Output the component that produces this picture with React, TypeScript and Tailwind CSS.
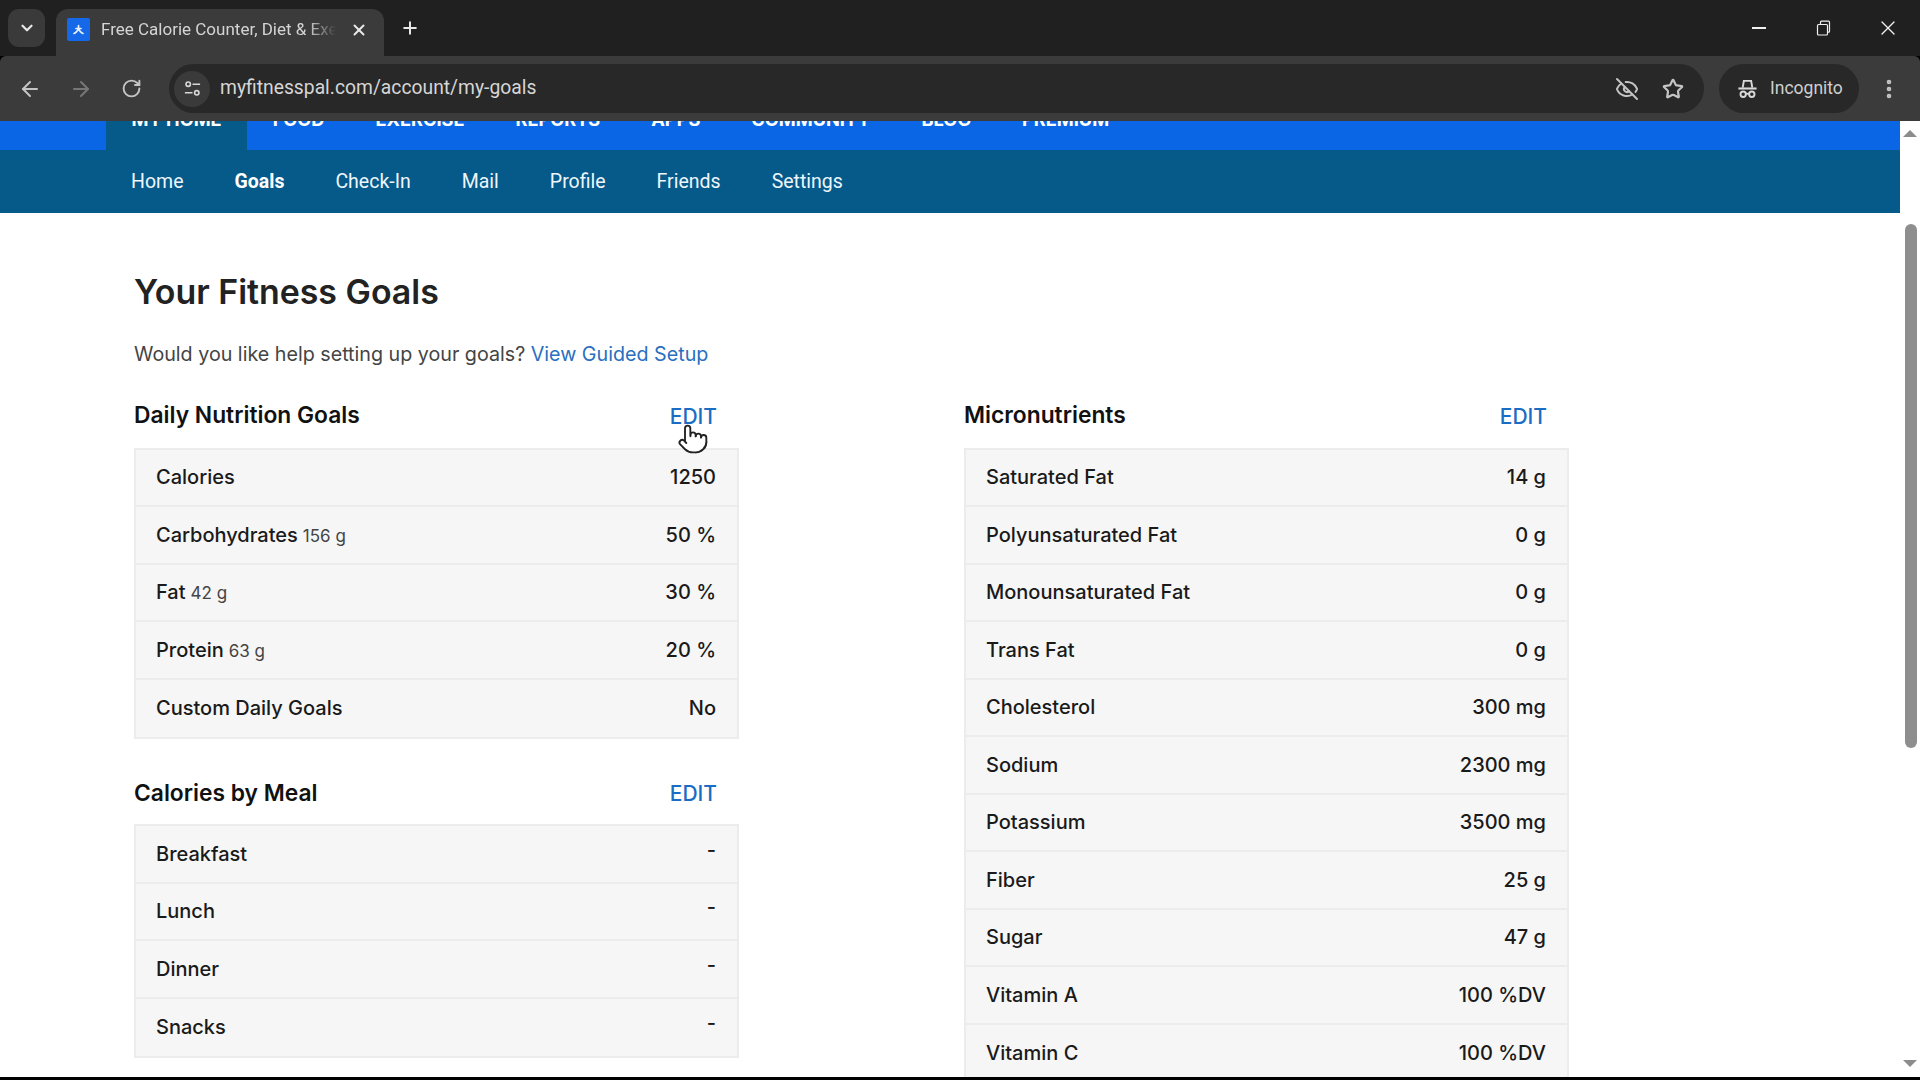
import { ArrowLeft, ArrowRight, ChevronDown, EllipsisVertical, EyeOff, Plus, Pointer, RotateCw, Star, X } from "lucide-react";

const TOP_NAV = [
  { label: "MY HOME", active: true },
  { label: "FOOD" },
  { label: "EXERCISE" },
  { label: "REPORTS" },
  { label: "APPS" },
  { label: "COMMUNITY" },
  { label: "BLOG" },
  { label: "PREMIUM" },
];

const SUB_NAV = ["Home", "Goals", "Check-In", "Mail", "Profile", "Friends", "Settings"];

const NUTRITION = [
  { name: "Calories", value: "1250" },
  { name: "Carbohydrates", sub: "156 g", value: "50 %" },
  { name: "Fat", sub: "42 g", value: "30 %" },
  { name: "Protein", sub: "63 g", value: "20 %" },
  { name: "Custom Daily Goals", value: "No" },
];

const MEALS = ["Breakfast", "Lunch", "Dinner", "Snacks"];

const MICROS = [
  ["Saturated Fat", "14 g"],
  ["Polyunsaturated Fat", "0 g"],
  ["Monounsaturated Fat", "0 g"],
  ["Trans Fat", "0 g"],
  ["Cholesterol", "300 mg"],
  ["Sodium", "2300 mg"],
  ["Potassium", "3500 mg"],
  ["Fiber", "25 g"],
  ["Sugar", "47 g"],
  ["Vitamin A", "100 %DV"],
  ["Vitamin C", "100 %DV"],
];

function Row({ name, sub, value, dash }: { name: string; sub?: string; value: string; dash?: boolean }) {
  return (
    <div className="flex h-[57.5px] shrink-0 items-center justify-between border-b-2 border-[#ececec] pl-[20px] pr-[21px] text-[20px] font-medium text-[#1a1a1a] last:border-b-0">
      <span>
        {name}
        {sub && <span className="ml-[5px] text-[17px] font-normal text-[#444]">{sub}</span>}
      </span>
      <span className={dash ? "-translate-y-[4px]" : ""}>{value}</span>
    </div>
  );
}

function SectionHead({ title, cursor }: { title: string; cursor?: boolean }) {
  return (
    <div className="flex h-[36px] items-center justify-between pr-[22px]">
      <h2 className="text-[22.8px] font-semibold text-[#111]">{title}</h2>
      <a className="relative mt-[2px] text-[21px] font-medium text-[#1a6dc4]">
        EDIT
        {cursor && (
          <Pointer className="absolute left-[7px] top-[22px] h-[32px] w-[32px] fill-white text-[#222]" strokeWidth={1.4} />
        )}
      </a>
    </div>
  );
}

function TuneIcon() {
  return (
    <svg viewBox="0 0 20 20" className="h-[19px] w-[19px]" fill="none" stroke="#d8d8d8" strokeWidth="1.7">
      <circle cx="5.5" cy="5.5" r="2.3" />
      <path d="M10 5.5h8M2 14.5h8" />
      <circle cx="14.5" cy="14.5" r="2.3" />
    </svg>
  );
}

function IncognitoIcon() {
  return (
    <svg viewBox="0 0 24 24" className="h-[23px] w-[23px]" fill="none" stroke="#d8d8d8" strokeWidth="2">
      <path d="M7 11l1.2-7h7.6L17 11" />
      <path d="M2.5 12h19" strokeWidth="2.2" />
      <circle cx="7.5" cy="18" r="2.8" />
      <circle cx="16.5" cy="18" r="2.8" />
      <path d="M10 17.5h4" />
    </svg>
  );
}

function Favicon() {
  return (
    <svg viewBox="0 0 23 23" className="h-[23px] w-[23px] shrink-0 rounded-[2px] bg-[#1568e8]" fill="none" stroke="#e8f0ff" strokeWidth="1.7" strokeLinecap="round">
      <path d="M11.5 7.5v3M7 15.5q3-1 4.5-5q1.5 4 4.5 5M9 10.5h5" />
    </svg>
  );
}

function RestoreIcon() {
  return (
    <svg viewBox="0 0 16 16" className="h-[16px] w-[16px]" fill="none" stroke="#f0f0f0" strokeWidth="1.2">
      <rect x="1.5" y="4.5" width="10" height="10.5" rx="1" />
      <path d="M4.5 4.5V2.2q0-1 1-1h7q1 0 1 1v9q0 1-1 1h-1" />
    </svg>
  );
}

export default function App() {
  return (
    <div className="flex h-screen w-full flex-col overflow-hidden bg-black font-['Inter',sans-serif]">
      {/* browser tab strip */}
      <div className="flex h-[56px] shrink-0 bg-[#202020] pl-[8px] font-['Roboto',sans-serif]">
        <div className="mt-[9px] flex h-[38px] w-[37px] items-center justify-center rounded-[11px] bg-[#3a3a3a]">
          <ChevronDown className="h-[18px] w-[18px] text-[#e6e6e6]" strokeWidth={3} />
        </div>
        <div className="ml-[11px] mt-[9px] flex h-[47px] w-[328px] items-center rounded-t-[12px] bg-[#3b3b3b] pb-[6px] pl-[11px]">
          <Favicon />
          <span className="ml-[11px] w-[235px] overflow-hidden whitespace-nowrap text-[17px] text-[#d4d4d4] [mask-image:linear-gradient(to_right,black_88%,transparent)]">
            Free Calorie Counter, Diet &amp; Exercise
          </span>
          <X className="ml-[14px] h-[18px] w-[18px] text-[#e8e8e8]" strokeWidth={2.6} />
        </div>
        <Plus className="ml-[16px] mt-[18px] h-[20px] w-[20px] text-[#e8e8e8]" strokeWidth={2.4} />
        <div className="ml-auto flex h-[56px] items-center">
          <div className="h-[2px] w-[14px] bg-[#f0f0f0]" />
          <div className="ml-[50px]">
            <RestoreIcon />
          </div>
          <X className="ml-[44px] mr-[20px] h-[24px] w-[24px] text-[#f0f0f0]" strokeWidth={1.4} />
        </div>
      </div>

      {/* browser toolbar */}
      <div className="flex h-[65px] shrink-0 items-center rounded-t-[6px] bg-[#3b3b3b] font-['Roboto',sans-serif]">
        <ArrowLeft className="ml-[18px] h-[24px] w-[24px] text-[#c4c4c4]" strokeWidth={2} />
        <ArrowRight className="ml-[27px] h-[24px] w-[24px] text-[#777]" strokeWidth={2} />
        <RotateCw className="ml-[28px] h-[21px] w-[21px] text-[#c4c4c4]" strokeWidth={2.2} />
        <div className="ml-[27px] flex h-[49px] w-[1535px] items-center rounded-full bg-[#282828] pl-[5px] pr-[20px]">
          <div className="flex h-[36px] w-[36px] items-center justify-center rounded-full bg-[#3a3a3a]">
            <TuneIcon />
          </div>
          <span className="ml-[10px] text-[19.3px] text-[#d6d6d6]">myfitnesspal.com/account/my-goals</span>
          <EyeOff className="ml-auto h-[24px] w-[24px] text-[#c4c4c4]" strokeWidth={2} />
          <Star className="ml-[23px] h-[22px] w-[22px] text-[#c4c4c4]" strokeWidth={2.4} />
        </div>
        <div className="ml-[15px] flex h-[49px] w-[140px] items-center rounded-full bg-[#282828] pl-[17px]">
          <IncognitoIcon />
          <span className="ml-[11px] text-[17.5px] text-[#cfcfcf]">Incognito</span>
        </div>
        <EllipsisVertical className="ml-[18px] h-[24px] w-[24px] text-[#c4c4c4]" strokeWidth={2.6} />
      </div>

      {/* page viewport */}
      <div className="flex h-[956px] shrink-0 bg-white">
        <main className="flex w-[1900px] flex-col overflow-hidden">
          <nav className="flex h-[29px] shrink-0 overflow-hidden bg-[#0b66e6] pl-[106px] text-[18.2px] font-bold text-white">
            {TOP_NAV.map((item) => (
              <span key={item.label} className={`-mt-[2px] h-[31px] px-[25.5px] leading-[0px] ${item.active ? "bg-[#055a8a]" : ""}`}>
                {item.label}
              </span>
            ))}
          </nav>
          <nav className="flex h-[63px] shrink-0 items-center gap-[51px] bg-[#055a8a] pl-[131px] font-['Roboto',sans-serif] text-[19.5px] text-[#eef6fb]">
            {SUB_NAV.map((item) => (
              <a key={item} className={item === "Goals" ? "font-bold text-white" : ""}>
                {item}
              </a>
            ))}
          </nav>

          <div className="flex flex-col pl-[134px] pt-[57px]">
            <h1 className="text-[33.9px] font-semibold leading-[44px] text-[#222]">Your Fitness Goals</h1>
            <p className="mt-[25.5px] text-[19.7px] leading-[28px] text-[#444]">
              Would you like help setting up your goals? <a className="text-[#2a6fc0]">View Guided Setup</a>
            </p>

            <div className="mt-[30px] flex items-start gap-[225px]">
              <div className="flex w-[605px] shrink-0 flex-col">
                <SectionHead title="Daily Nutrition Goals" cursor />
                <div className="mt-[14px] border-2 border-[#ececec] bg-[#f6f6f6]">
                  {NUTRITION.map((row) => (
                    <Row key={row.name} {...row} />
                  ))}
                </div>
                <div className="mt-[36px]">
                  <SectionHead title="Calories by Meal" />
                </div>
                <div className="mt-[13px] border-2 border-[#ececec] bg-[#f6f6f6]">
                  {MEALS.map((meal) => (
                    <Row key={meal} name={meal} value="-" dash />
                  ))}
                </div>
              </div>

              <div className="flex w-[605px] shrink-0 flex-col">
                <SectionHead title="Micronutrients" />
                <div className="mt-[14px] border-2 border-[#ececec] bg-[#f6f6f6]">
                  {MICROS.map(([name, value]) => (
                    <Row key={name} name={name} value={value} />
                  ))}
                </div>
              </div>
            </div>
          </div>
        </main>

        {/* scrollbar */}
        <div className="flex w-[20px] shrink-0 flex-col items-center bg-white">
          <div className="mt-[9px] h-0 w-0 border-x-[7px] border-b-[7px] border-x-transparent border-b-[#8c8c8c]" />
          <div className="ml-[2px] mt-[87px] h-[524px] w-[12px] rounded-full bg-[#8e8e8e]" />
          <div className="mt-auto mb-[10px] h-0 w-0 border-x-[7px] border-t-[7px] border-x-transparent border-t-[#8c8c8c]" />
        </div>
      </div>
    </div>
  );
}
